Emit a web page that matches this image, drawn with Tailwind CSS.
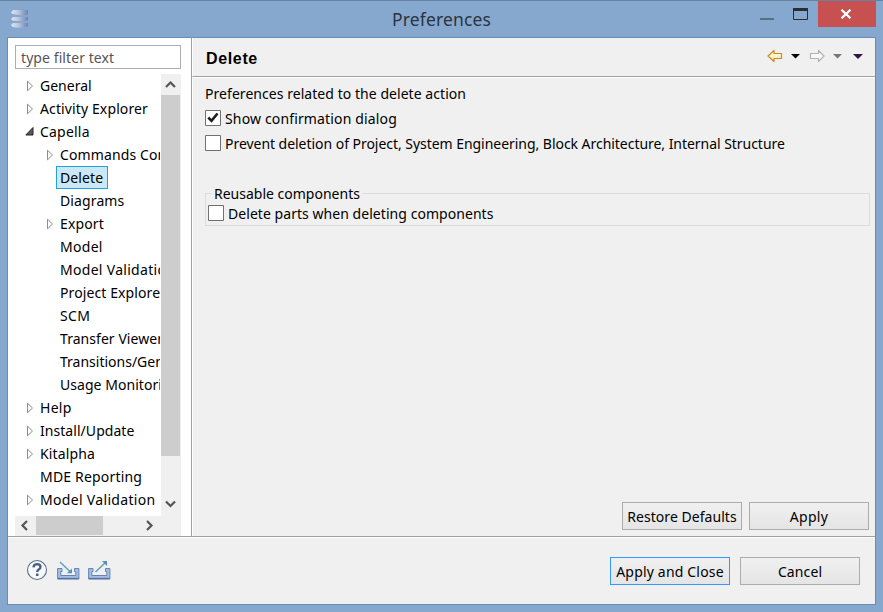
<!DOCTYPE html>
<html lang="en">
<head>
<meta charset="utf-8">
<title>Preferences</title>
<script src="https://cdn.jsdelivr.net/npm/@tailwindcss/browser@4"></script>
</head>
<body class="w-[883px] h-[612px] overflow-hidden bg-[#86a8cf] font-['Noto_Sans','Open_Sans',sans-serif] text-[14px] leading-[23px] text-black whitespace-nowrap">
<svg width="0" height="0" class="absolute">
  <defs>
    <symbol id="closed" viewBox="0 0 8 12"><path d="M1.500 1.200V10.800L6.500 6Z" fill="#fff" stroke="#8c8c8c"/></symbol>
    <symbol id="tray" viewBox="0 0 23 13"><path d="M.6 1.500H5V4.500H3.800V8.500H18.800V4.500H17.500V1.500H21.900V12H.6Z" fill="#a9bddb" stroke="#6484b8" stroke-width="1"/><path d="M1 11.500H21.500" stroke="#5576ad" stroke-width="1.400"/></symbol>
  </defs>
</svg>
<div class="flex flex-col w-[883px] h-[612px] border-t border-[#6583a5] pl-[7px] pr-[7px]">
  <header class="h-9 flex items-start">
    <svg class="mt-[8px] ml-[3px]" width="20" height="20" viewBox="0 0 20 20">
      <defs><linearGradient id="db"><stop offset="0" stop-color="#dfe4ef"/><stop offset=".4" stop-color="#bec9df"/><stop offset="1" stop-color="#6d83b3"/></linearGradient></defs>
      <g fill="url(#db)"><path d="M3 1H18V5.500Q10 7 2.500 5L1 3.500Z"/><path d="M3 8H18V11.500Q10 13 2.500 11.500L1 10Z"/><path d="M3 14H18V17.500Q10 19.500 2.500 18L1 16Z"/></g>
    </svg>
    <h1 class="w-[99px] ml-[362px] mt-[6px] text-[17.500px] leading-[24px] tracking-[0.150px] text-[#2b3440]">Preferences</h1>
    <svg class="ml-[269px] mt-[17px]" width="14" height="2"><rect width="14" height="2" fill="#596f88"/></svg>
    <svg class="ml-[19px] mt-[7px]" width="15" height="12"><path d="M.5 .5H14.500V11.500H.5Z" fill="none" stroke="#2a2e33"/><rect width="15" height="3" fill="#2a2e33"/></svg>
    <div class="ml-[10px] -mr-[8px] w-[58px] h-[26px] bg-[#c75050] flex items-center justify-center pr-[2px]">
      <svg width="12" height="10" viewBox="0 0 12 10"><path d="M1.500 .7L10.500 9.300M10.500 .7L1.500 9.300" stroke="#fff" stroke-width="2.200"/></svg>
    </div>
  </header>

  <main class="flex flex-col h-[568px] border border-[#6a8db3] bg-[#f0f0f0]">
    <div class="flex h-[498px]">
      <aside class="w-[183px] bg-white pl-[7px] pt-[7px]">
        <div class="w-[166px] h-6 border border-[#abadb3] pl-[5px] leading-[23px] text-[#555] tracking-[0.080px]">type filter text</div>
        <div class="flex mt-[5px] h-[442px]">
          <ul class="w-[145px] mr-px overflow-hidden tracking-[0.120px]">
            <li class="flex items-center h-[23px] pl-[11px]"><svg class="mr-[6px]" width="8" height="12"><use href="#closed"/></svg><span class="tracking-[0px]">General</span></li>
            <li class="flex items-center h-[23px] pl-[11px]"><svg class="mr-[6px]" width="8" height="12"><use href="#closed"/></svg>Activity Explorer</li>
            <li class="flex items-center h-[23px] pl-[10px]"><svg class="mr-[6px]" width="9" height="9"><path d="M8 .5V8H.8Z" fill="#595959" stroke="#262626"/></svg><span class="tracking-[0.200px]">Capella</span></li>
            <li class="flex items-center h-[23px] pl-[31px]"><svg class="mr-[6px] shrink-0" width="8" height="12"><use href="#closed"/></svg>Commands Con</li>
            <li class="flex h-[23px] pl-[41px]"><span class="w-[52px] h-[23px] border border-[#26a0da] bg-[#cbe8f6] pl-[3px] leading-[21px]">Delete</span></li>
            <li class="h-[23px] pl-[45px]">Diagrams</li>
            <li class="flex items-center h-[23px] pl-[31px]"><svg class="mr-[6px]" width="8" height="12"><use href="#closed"/></svg>Export</li>
            <li class="h-[23px] pl-[45px] tracking-[0.300px]">Model</li>
            <li class="h-[23px] pl-[45px] tracking-[0.300px]">Model Validation</li>
            <li class="h-[23px] pl-[45px] tracking-[0.100px]">Project Explorer</li>
            <li class="h-[23px] pl-[45px] tracking-[0.300px]">SCM</li>
            <li class="h-[23px] pl-[45px] tracking-[0.050px]">Transfer Viewer</li>
            <li class="h-[23px] pl-[45px] tracking-[0px]">Transitions/Gen</li>
            <li class="h-[23px] pl-[45px] tracking-[0.050px]">Usage Monitoring</li>
            <li class="flex items-center h-[23px] pl-[11px]"><svg class="mr-[6px]" width="8" height="12"><use href="#closed"/></svg><span class="tracking-[0.300px]">Help</span></li>
            <li class="flex items-center h-[23px] pl-[11px]"><svg class="mr-[6px]" width="8" height="12"><use href="#closed"/></svg><span class="tracking-[0.050px]">Install/Update</span></li>
            <li class="flex items-center h-[23px] pl-[11px]"><svg class="mr-[6px]" width="8" height="12"><use href="#closed"/></svg>Kitalpha</li>
            <li class="h-[23px] pl-[25px] tracking-[0.180px]">MDE Reporting</li>
            <li class="flex items-center h-[23px] pl-[11px]"><svg class="mr-[6px]" width="8" height="12"><use href="#closed"/></svg><span class="tracking-[0.320px]">Model Validation</span></li>
          </ul>
          <div class="w-5 bg-[#f0f0f0] flex flex-col">
            <svg width="20" height="21"><path d="M5 13L9.500 8.500L14 13" fill="none" stroke="#555" stroke-width="2.200"/></svg>
            <div class="w-[19px] h-[361px] bg-[#cdcdcd]"></div>
            <svg class="mt-[39px]" width="20" height="20"><path d="M5 6.500L9.500 11L14 6.500" fill="none" stroke="#555" stroke-width="2.200"/></svg>
          </div>
        </div>
        <div class="w-[166px] h-5 bg-[#f0f0f0] flex">
          <svg width="21" height="20"><path d="M12 5L7.500 9.500L12 14" fill="none" stroke="#555" stroke-width="2.200"/></svg>
          <div class="w-[67px] h-[19px] bg-[#cdcdcd]"></div>
          <svg class="ml-[37px]" width="20" height="20"><path d="M7 5L11.500 9.500L7 14" fill="none" stroke="#555" stroke-width="2.200"/></svg>
        </div>
      </aside>
      <section class="flex flex-col flex-1 border-l border-[#a0a0a0]">
        <div class="flex items-start h-[39px] border-l border-l-white border-b border-b-[#a0a0a0] pl-[13px]">
          <h2 class="w-[561px] mt-[8px] font-['Liberation_Sans',sans-serif] text-[16px] leading-[26px] font-bold tracking-[0.650px]">Delete</h2>
          <svg class="mt-[11px]" width="100" height="16" viewBox="0 0 100 16">
            <defs><linearGradient id="gold" x2="0" y2="1"><stop offset="0" stop-color="#fffdf0"/><stop offset="1" stop-color="#fbe59a"/></linearGradient></defs>
            <path d="M1 7L7 1.500V4.500H14.500V9.500H7V12.500Z" fill="url(#gold)" stroke="#c58a2a" stroke-width="1.200" stroke-linejoin="round"/>
            <path d="M24 5H33L28.500 9.500Z" fill="#000"/>
            <path d="M57 7L51.500 1.500V4.500H43.500V9.500H51.500V12.500Z" fill="#f8f8f8" stroke="#b2b2b2" stroke-width="1.200" stroke-linejoin="round"/>
            <path d="M66 5H75L70.500 9.500Z" fill="#777"/>
            <path d="M86 5H96L91 10Z" fill="#2c1746"/>
          </svg>
        </div>
        <div class="flex flex-col flex-1 border-t border-l border-white pl-[12px] pr-[5px]">
          <p class="mt-[4px] tracking-[0.050px]">Preferences related to the delete action</p>
          <label class="flex items-center mt-[2px] h-[23px]"><svg class="mr-[4px] mb-[2px]" width="16" height="16"><path d="M.5 .5H15.500V15.500H.5Z" fill="#fff" stroke="#707070"/><path d="M3.300 7.500L6.500 10.800L12.500 3.500" fill="none" stroke="#1d1d1d" stroke-width="2.600"/></svg><span class="tracking-[0.150px]">Show confirmation dialog</span></label>
          <label class="flex items-center mt-[2px] h-[23px]"><svg class="mr-[4px] mb-[2px]" width="16" height="16"><path d="M.5 .5H15.500V15.500H.5Z" fill="#fff" stroke="#707070"/></svg><span class="tracking-[-0.040px]">Prevent deletion of Project, System Engineering, Block Architecture, Internal Structure</span></label>
          <div class="relative mt-[38px] h-[33px] border border-[#dcdcdc]">
            <span class="absolute left-[6px] -top-[12px] px-[2px] bg-[#f0f0f0]">Reusable components</span>
            <label class="flex items-center mt-[8px] ml-[2px] h-[23px]"><svg class="mr-[4px] mb-[2px]" width="16" height="16"><path d="M.5 .5H15.500V15.500H.5Z" fill="#fff" stroke="#707070"/></svg><span class="tracking-[0.050px]">Delete parts when deleting components</span></label>
          </div>
          <div class="flex justify-end gap-[7px] mt-auto mb-[6px] mr-px">
            <button class="w-[120px] h-[28px] border border-[#acacac] bg-linear-to-b from-[#f0f0f0] to-[#e5e5e5] tracking-[0.050px]">Restore Defaults</button>
            <button class="w-[120px] h-[28px] border border-[#acacac] bg-linear-to-b from-[#f0f0f0] to-[#e5e5e5] tracking-[0.300px]">Apply</button>
          </div>
        </div>
      </section>
    </div>
    <footer class="flex items-start h-[68px] border-t border-[#a0a0a0]">
      <div class="flex w-full h-[67px] border-t border-white">
        <svg class="ml-[18px] mt-[21px]" width="22" height="22" viewBox="0 0 22 22"><circle cx="11" cy="11" r="9.500" fill="#f8f9fb" stroke="#5b6e8e" stroke-width="1.100"/><path d="M7.500 8.300Q7.800 5.200 11.200 5.200Q14.500 5.400 14.500 8Q14.500 9.400 12.700 10.500Q11.200 11.500 11.200 13" fill="none" stroke="#4a5f88" stroke-width="2.300"/><rect x="10" y="14.500" width="2.500" height="2.500" fill="#4a5f88"/></svg>
        <svg class="ml-[9px] mt-[23px]" width="24" height="20" viewBox="0 0 24 20"><use href="#tray" y="6" width="23" height="13"/><path d="M3 1L13 10.500" stroke="#5e9dc4" stroke-width="1.500"/><path d="M15 7.500V12.200H9.800Z" fill="#5790b8"/></svg>
        <svg class="ml-[7px] mt-[23px]" width="24" height="20" viewBox="0 0 24 20"><use href="#tray" y="6" width="23" height="13"/><path d="M7.500 11L17 2" stroke="#5e9dc4" stroke-width="1.500"/><path d="M14 0H19V5Z" fill="#5790b8"/></svg>
        <div class="flex gap-[10px] ml-auto mr-[15px] mt-[19px]">
          <button class="w-[120px] h-[28px] border border-[#3399ff] bg-linear-to-b from-[#f0f0f0] to-[#e5e5e5] tracking-[0.180px]">Apply and Close</button>
          <button class="w-[120px] h-[28px] border border-[#acacac] bg-linear-to-b from-[#f0f0f0] to-[#e5e5e5] tracking-[0.100px]">Cancel</button>
        </div>
      </div>
    </footer>
  </main>
</div>
</body>
</html>
